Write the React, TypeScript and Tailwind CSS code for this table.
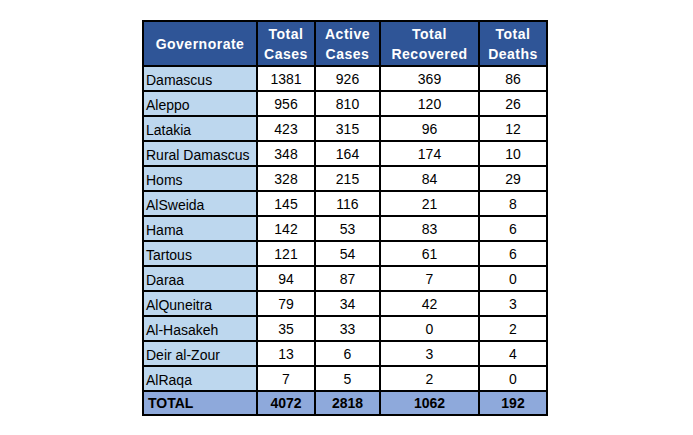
import React from "react";

const rows: [string, number, number, number, number][] = [
  ["Damascus", 1381, 926, 369, 86],
  ["Aleppo", 956, 810, 120, 26],
  ["Latakia", 423, 315, 96, 12],
  ["Rural Damascus", 348, 164, 174, 10],
  ["Homs", 328, 215, 84, 29],
  ["AlSweida", 145, 116, 21, 8],
  ["Hama", 142, 53, 83, 6],
  ["Tartous", 121, 54, 61, 6],
  ["Daraa", 94, 87, 7, 0],
  ["AlQuneitra", 79, 34, 42, 3],
  ["Al-Hasakeh", 35, 33, 0, 2],
  ["Deir al-Zour", 13, 6, 3, 4],
  ["AlRaqa", 7, 5, 2, 0],
];

export default function App() {
  return (
    <div className="w-[693px] h-[435px] bg-white pl-[142px] pt-[20px]" style={{ fontFamily: '"Liberation Sans", Arial, sans-serif' }}>
      <table className="table-fixed border-collapse w-[404px] text-[14px] text-black">
        <colgroup>
          <col className="w-[114px]" />
          <col className="w-[58px]" />
          <col className="w-[65px]" />
          <col className="w-[99px]" />
          <col className="w-[68px]" />
        </colgroup>
        <thead>
          <tr className="h-[45px] bg-[#2f5597] text-white font-bold tracking-[0.5px] leading-[20px]">
            <th className="border-2 border-black p-0 text-center align-middle">Governorate</th>
            <th className="border-2 border-black p-0 text-center align-middle">Total<br />Cases</th>
            <th className="border-2 border-black p-0 text-center align-middle">Active<br />Cases</th>
            <th className="border-2 border-black p-0 text-center align-middle">Total<br />Recovered</th>
            <th className="border-2 border-black p-0 text-center align-middle">Total<br />Deaths</th>
          </tr>
        </thead>
        <tbody>
          {rows.map((r) => (
            <tr key={r[0]} className="h-[25px] leading-[16px]">
              <td className="border-2 border-black bg-[#bdd7ee] pl-[2px] pr-0 pt-[2px] pb-0 whitespace-nowrap">{r[0]}</td>
              <td className="border-2 border-black text-center p-0 pt-[1px]">{r[1]}</td>
              <td className="border-2 border-black text-center p-0 pt-[1px]">{r[2]}</td>
              <td className="border-2 border-black text-center p-0 pt-[1px]">{r[3]}</td>
              <td className="border-2 border-black text-center p-0 pt-[1px]">{r[4]}</td>
            </tr>
          ))}
          <tr className="h-[24px] bg-[#8ea9db] font-bold leading-[16px]">
            <td className="border-2 border-black pl-[4px] p-0">TOTAL</td>
            <td className="border-2 border-black text-center p-0">4072</td>
            <td className="border-2 border-black text-center p-0">2818</td>
            <td className="border-2 border-black text-center p-0">1062</td>
            <td className="border-2 border-black text-center p-0">192</td>
          </tr>
        </tbody>
      </table>
    </div>
  );
}
